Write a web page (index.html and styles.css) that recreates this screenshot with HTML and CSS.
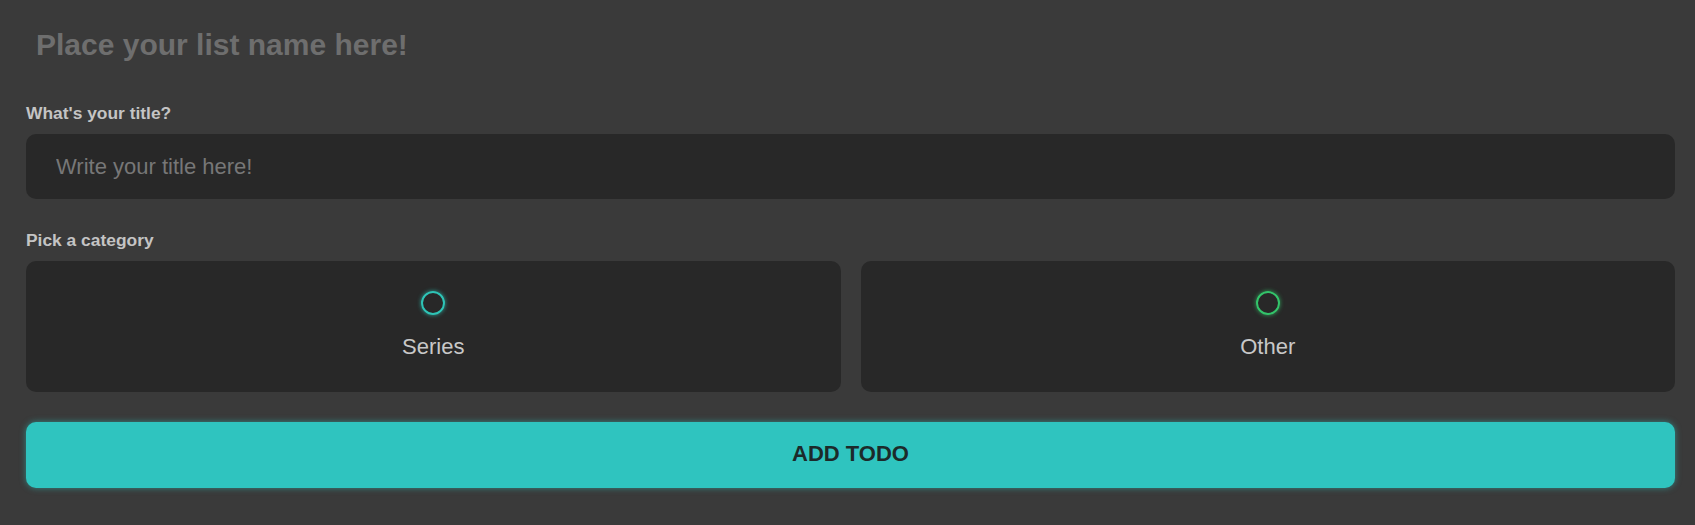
FILE: index.html
```html
<!DOCTYPE html>
<html lang="en">
<head>
<meta charset="utf-8">
<title>Todo</title>
<link rel="stylesheet" href="styles.css">
</head>
<body>
<main class="app">
  <input class="list-name" type="text" placeholder="Place your list name here!">
  <form class="todo-form">
    <label class="field-label" for="title">What's your title?</label>
    <input id="title" class="title-input" type="text" placeholder="Write your title here!">
    <p class="field-label category-label">Pick a category</p>
    <div class="categories">
      <label class="category">
        <span class="bubble bubble-series"></span>
        <span class="category-name">Series</span>
      </label>
      <label class="category">
        <span class="bubble bubble-other"></span>
        <span class="category-name">Other</span>
      </label>
    </div>
    <button class="add-btn" type="button">ADD TODO</button>
  </form>
</main>
</body>
</html>
```
FILE: styles.css
```css
* { box-sizing: border-box; }
html, body { margin: 0; height: 100%; }
body {
  background: #3a3a3a;
  font-family: "Liberation Sans", Arial, sans-serif;
}
.app {
  padding: 27px 20px 0 26px;
}
.list-name {
  display: block;
  width: 100%;
  border: none;
  outline: none;
  background: transparent;
  padding: 0 0 0 10px;
  margin: 0 0 40px 0;
  height: 36px;
  font: bold 30px/36px "Liberation Sans", Arial, sans-serif;
  color: #6e6e6e;
}
.list-name::placeholder { color: #6e6e6e; opacity: 1; }
.todo-form { display: flex; flex-direction: column; }
.field-label {
  display: block;
  margin: 0 0 11px 0;
  font: bold 17.4px/20px "Liberation Sans", Arial, sans-serif;
  color: #c4c4c4;
}
.title-input {
  display: block;
  width: 100%;
  height: 65px;
  border: none;
  outline: none;
  border-radius: 10px;
  background: #282828;
  padding: 0 0 0 30px;
  font: 22px "Liberation Sans", Arial, sans-serif;
  color: #c8c8c8;
}
.title-input::placeholder { color: #777777; opacity: 1; }
.category-label { margin-top: 31px; margin-bottom: 11px; }
.categories {
  display: grid;
  grid-template-columns: 1fr 1fr;
  gap: 20px;
}
.category {
  display: flex;
  flex-direction: column;
  align-items: center;
  gap: 19px;
  padding: 30px 0 32px;
  background: #282828;
  border-radius: 10px;
  cursor: pointer;
}
.bubble {
  width: 24px;
  height: 24px;
  border-radius: 50%;
  border: 2px solid;
}
.bubble-series {
  border-color: #2ec4b6;
  box-shadow: 0 0 4px rgba(46, 196, 182, 0.75);
}
.bubble-other {
  border-color: #33c46a;
  box-shadow: 0 0 4px rgba(51, 196, 106, 0.75);
}
.category-name {
  font: 22px/26px "Liberation Sans", Arial, sans-serif;
  color: #c8c8c8;
}
.add-btn {
  margin-top: 30px;
  height: 66px;
  width: 100%;
  border: none;
  border-radius: 10px;
  background: #2fc4bf;
  box-shadow: 0 0 6px rgba(46, 196, 190, 0.55);
  padding: 0 0 2px 0;
  font: bold 22px "Liberation Sans", Arial, sans-serif;
  color: #1c2a2a;
  cursor: pointer;
}
```
